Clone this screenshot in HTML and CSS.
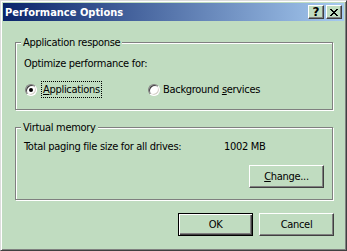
FILE: index.html
```html
<!DOCTYPE html>
<html>
<head>
    <meta charset="UTF-8">
    <title>Performance Options</title>
    <link rel="stylesheet" href="styles.css">
</head>
<body>
    <div class="window">
        <div class="titlebar">
            <span class="title">Performance Options</span>
            <button class="cap-btn help">?</button>
            <button class="cap-btn close">
                <svg width="8" height="7" viewBox="0 0 8 7" shape-rendering="crispEdges">
                    <path d="M0 0h2v1h1v1h2v-1h1v-1h2v1h-1v1h-1v1h-1v1h1v1h1v1h1v1h-2v-1h-1v-1h-2v1h-1v1h-2v-1h1v-1h1v-1h1v-1h-1v-1h-1v-1h-1z" fill="#000"/>
                </svg>
            </button>
        </div>
        <div class="client">
            <fieldset class="group group-app">
                <legend>Application response</legend>
                <div class="line">Optimize performance for:</div>
                <div class="radios">
                    <label class="radio radio-first">
                        <span class="radio-dot checked"></span>
                        <span class="radio-text focus"><u>A</u>pplications</span>
                    </label>
                    <label class="radio radio-second">
                        <span class="radio-dot"></span>
                        <span class="radio-text">Background <u>s</u>ervices</span>
                    </label>
                </div>
            </fieldset>
            <fieldset class="group group-vm">
                <legend>Virtual memory</legend>
                <div class="vm-row">
                    <span class="vm-label">Total paging file size for all drives:</span>
                    <span class="vm-value">1002 MB</span>
                </div>
                <div class="vm-actions">
                    <button class="btn"><u>C</u>hange...</button>
                </div>
            </fieldset>
            <div class="footer">
                <button class="btn btn-default">OK</button>
                <button class="btn">Cancel</button>
            </div>
        </div>
    </div>
</body>
</html>
```

FILE: styles.css
```css
body {
    margin: 0;
    font-family: "DejaVu Sans Condensed", "DejaVu Sans", sans-serif;
    font-size: 11px;
    line-height: 13px;
    letter-spacing: -0.3px;
    color: #000;
    background: #c0dcc0;
}
.window {
    width: 347px;
    height: 251px;
    box-sizing: border-box;
    border: 1px solid;
    border-color: #dcdcdc #404040 #404040 #dcdcdc;
    box-shadow: inset 1px 1px #fff, inset -1px -1px #808080;
    padding: 2px;
    background: #c0dcc0;
    display: flex;
    flex-direction: column;
}
.titlebar {
    height: 18px;
    display: flex;
    align-items: center;
    padding: 0 2px;
    background: linear-gradient(to right, #0a246a, #a6caf0);
}
.title {
    flex: 1;
    color: #fff;
    font-weight: bold;
    letter-spacing: 0;
}
.cap-btn {
    width: 16px;
    height: 14px;
    margin-left: 2px;
    padding: 0;
    box-sizing: border-box;
    background: #c0dcc0;
    border: 1px solid;
    border-color: #fff #404040 #404040 #fff;
    box-shadow: inset -1px -1px #808080;
    font-family: "DejaVu Sans", sans-serif;
    font-size: 12px;
    font-weight: bold;
    line-height: 12px;
    display: flex;
    align-items: center;
    justify-content: center;
}
.client {
    padding: 0 10px 0 12px;
}
.group {
    margin: 0 1px 0 0;
    border: 1px solid #808080;
    box-shadow: inset 1px 1px #fff, 1px 1px #fff;
    min-width: 0;
}
.group legend {
    padding: 0 2px;
    margin-left: -3px;
    background: #c0dcc0;
    line-height: 13px;
}
.group-app {
    margin-top: 15px;
    padding: 8px 8px 11px;
}
.group-vm {
    margin-top: 11px;
    padding: 6px 8px 11px;
}
.radios {
    display: flex;
    height: 17px;
    margin-top: 11px;
}
.radio {
    display: flex;
    align-items: center;
}
.radio-first {
    width: 123px;
    margin-left: 1px;
}
.radio-dot {
    width: 12px;
    height: 12px;
    box-sizing: border-box;
    border-radius: 50%;
    border: 1px solid;
    border-color: #808080 #fff #fff #808080;
    box-shadow: inset 1px 1px #404040, inset -1px -1px #d4d0c8;
    background: #fff;
    display: flex;
    align-items: center;
    justify-content: center;
}
.radio-dot.checked::after {
    content: "";
    width: 4px;
    height: 4px;
    border-radius: 50%;
    background: #000;
}
.radio-text {
    margin-left: 3px;
}
.radio-first .radio-text {
    margin-left: 4px;
}
.focus {
    border: 1px dotted #000;
    padding: 1px 1px;
}
.vm-row {
    display: flex;
}
.vm-label {
    width: 200px;
}
.vm-actions {
    display: flex;
    justify-content: flex-end;
    margin-top: 12px;
}
.btn {
    width: 75px;
    height: 23px;
    padding: 0;
    box-sizing: border-box;
    background: #c0dcc0;
    border: 1px solid;
    border-color: #fff #404040 #404040 #fff;
    box-shadow: inset -1px -1px #808080;
    font-family: inherit;
    font-size: 11px;
    letter-spacing: inherit;
    color: #000;
}
.btn-default {
    border: 1px solid #000;
    box-shadow: inset 1px 1px #fff, inset -1px -1px #404040, inset -2px -2px #808080;
}
.footer {
    display: flex;
    justify-content: flex-end;
    gap: 6px;
    margin-top: 13px;
}
```
